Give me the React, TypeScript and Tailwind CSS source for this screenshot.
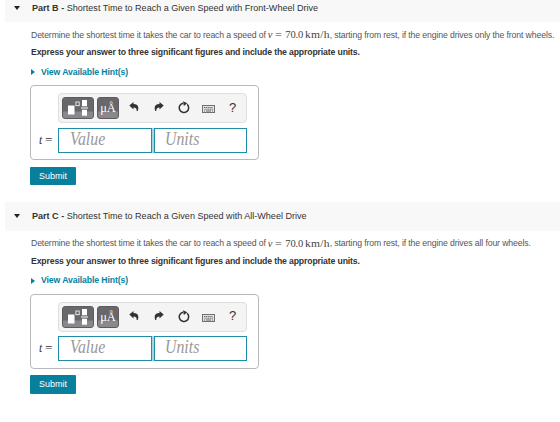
import { ReactElement } from 'react'

interface PartProps {
  label: string
  title: string
  ending: string
}

const UndoArrow = ({ flipped }: { flipped?: boolean }): ReactElement => (
  <svg
    viewBox="0 0 10 9"
    className={
      flipped ? 'h-[9px] w-[10px] shrink-0 -scale-x-100' : 'h-[9px] w-[10px] shrink-0'
    }
    fill="#333"
    aria-hidden="true"
  >
    <path d="M0.300 3.600 4.500 0v2C8.600 2 10.400 4.600 8.700 9H7.600C7.900 6.800 6.800 5.500 4.500 5.500V7.400z" />
  </svg>
)

const ResetIcon = (): ReactElement => (
  <svg viewBox="0 0 12 13" className="h-[13px] w-3" fill="none" aria-hidden="true">
    <path d="M9.200 3.400A4.700 4.700 0 1 1 5 2.200" stroke="#333" strokeWidth="1.500" />
    <path d="M5 0.300 9.400 2.200 5.800 5z" fill="#333" />
  </svg>
)

const KeyboardIcon = (): ReactElement => (
  <svg viewBox="0 0 13 8" className="h-2 w-[13px]" fill="none" aria-hidden="true">
    <rect x="0.500" y="0.500" width="12" height="7" fill="#e4e4e4" stroke="#707070" />
    <path d="M2 2.500h9M2.500 4.200h8.500" stroke="#666" strokeDasharray="1.200 0.600" />
    <path d="M2 6h1M4 6h5M10 6h1" stroke="#666" />
  </svg>
)

const TemplateIcon = (): ReactElement => (
  <svg viewBox="0 0 20 18" className="h-[18px] w-5" fill="#fff" aria-hidden="true">
    <rect x="0" y="6.500" width="6.500" height="9" />
    <rect x="7.900" y="3" width="3.300" height="3.700" fill="none" stroke="#fff" strokeWidth="0.800" />
    <rect x="14" y="1" width="5" height="6.300" />
    <rect x="13" y="8.500" width="7" height="1" />
    <rect x="14" y="10.700" width="5" height="6" />
  </svg>
)

const Toolbar = (): ReactElement => (
  <div className="ml-[27px] flex h-[30px] w-[189px] items-center rounded-[4px] border border-[#dedede] bg-[#f4f4f4] pl-[3px] text-[#333]">
    <button className="flex h-[22px] w-[32px] items-center justify-center rounded-[3px] border border-[#5c5c60] bg-linear-to-b from-[#68686c] from-65% to-[#88888d] to-70%">
      <TemplateIcon />
    </button>
    <button className="ml-[3px] flex h-[22px] w-[22px] items-center justify-center rounded-[3px] border border-[#5c5c60] bg-linear-to-b from-[#68686c] from-65% to-[#88888d] to-70% pt-[1px] font-['Liberation_Serif',serif] text-[12.500px] leading-none text-white">
      μÅ
    </button>
    <div className="ml-[10px] flex items-center">
      <span className="-mt-[3px] flex">
        <UndoArrow />
      </span>
      <span className="-mt-[3px] ml-[15px] flex">
        <UndoArrow flipped />
      </span>
      <span className="-mt-[1px] ml-[14px] flex">
        <ResetIcon />
      </span>
      <span className="mt-[2px] ml-[12px] flex">
        <KeyboardIcon />
      </span>
      <span className="-mt-[2px] ml-[14px] text-[13px] leading-none">?</span>
    </div>
  </div>
)

const AnswerBox = (): ReactElement => (
  <div className="h-[75px] w-[229px] rounded-[4px] border border-[#b9b9b9] bg-white pt-[7px]">
    <Toolbar />
    <div className="mt-[4.700px] flex h-[25px] items-center font-['Liberation_Serif',serif]">
      <span className="flex w-[27px] gap-[3px] pl-[8px] text-[11.500px] whitespace-nowrap text-[#333]">
        <i>t</i>
        <span className="inline-block origin-left scale-x-[1.150]">=</span>
      </span>
      <div className="flex h-full gap-[2px] bg-[#a5d3de] text-[18px] leading-[21px] text-[#999] italic">
        <div className="w-[94px] border border-[#218ca7] bg-white pl-[11px]">
          <span className="inline-block origin-left scale-x-[0.880]">Value</span>
        </div>
        <div className="w-[93px] border border-[#218ca7] bg-white pl-[10px]">
          <span className="inline-block origin-left scale-x-[0.880]">Units</span>
        </div>
      </div>
    </div>
  </div>
)

const Part = ({ label, title, ending }: PartProps): ReactElement => (
  <section className="h-[208.500px]">
    <header className="ml-[5px] flex h-[29px] items-center bg-[#f8f8f8] text-[9.050px] text-[#333]">
      <span className="ml-[9px] border-x-[3.500px] border-t-[4px] border-x-transparent border-t-[#222]" />
      <h2 className="ml-[12px] pt-[2px] whitespace-nowrap">
        <b>{label} -</b> {title}
      </h2>
    </header>
    <div className="pl-[30px]">
      <p className="flex h-[26px] items-center pt-[1px] pl-[1px] text-[8.700px] tracking-[-0.120px] whitespace-nowrap text-[#555]">
        <span>Determine the shortest time it takes the car to reach a speed of</span>
        <span className="-mt-[1px] ml-[2px] flex w-[62px] font-['Liberation_Serif',serif] text-[10.500px] tracking-normal text-[#444]">
          <i className="w-[7px]">v</i>
          <span className="w-[10.500px] origin-left scale-x-[1.150]">=</span>
          <span className="w-[19.500px] tracking-[-0.100px]">70.0</span>
          <span className="origin-left scale-x-[1.100] tracking-[0.200px]">km/h</span>
        </span>
        <span>, starting from rest, if the engine drives {ending}</span>
      </p>
      <p className="flex h-[9px] items-center pt-[1px] pl-[1px] text-[8.700px] font-bold tracking-[-0.145px] whitespace-nowrap text-[#333]">
        Express your answer to three significant figures and include the appropriate units.
      </p>
      <a className="flex h-[28px] items-center pt-[2px] text-[8.700px] font-bold tracking-[-0.110px] text-[#07809d]">
        <span className="ml-[1px] border-y-[3.500px] border-l-[4px] border-y-transparent border-l-[#07809d]" />
        <span className="ml-[6px] pt-[1px]">View Available Hint(s)</span>
      </a>
      <AnswerBox />
      <button className="mt-[6.600px] block h-[18.500px] w-[46px] rounded-[1px] bg-[#07809d] text-[9px] leading-[18px] text-white">
        Submit
      </button>
    </div>
  </section>
)

const App = (): ReactElement => (
  <main className="h-[422px] w-[560px] overflow-hidden bg-white font-['Liberation_Sans',Arial,sans-serif]">
    <div className="-mt-[7px]">
      <Part
        label="Part B"
        title="Shortest Time to Reach a Given Speed with Front-Wheel Drive"
        ending="only the front wheels."
      />
      <Part
        label="Part C"
        title="Shortest Time to Reach a Given Speed with All-Wheel Drive"
        ending="all four wheels."
      />
    </div>
  </main>
)

export default App
